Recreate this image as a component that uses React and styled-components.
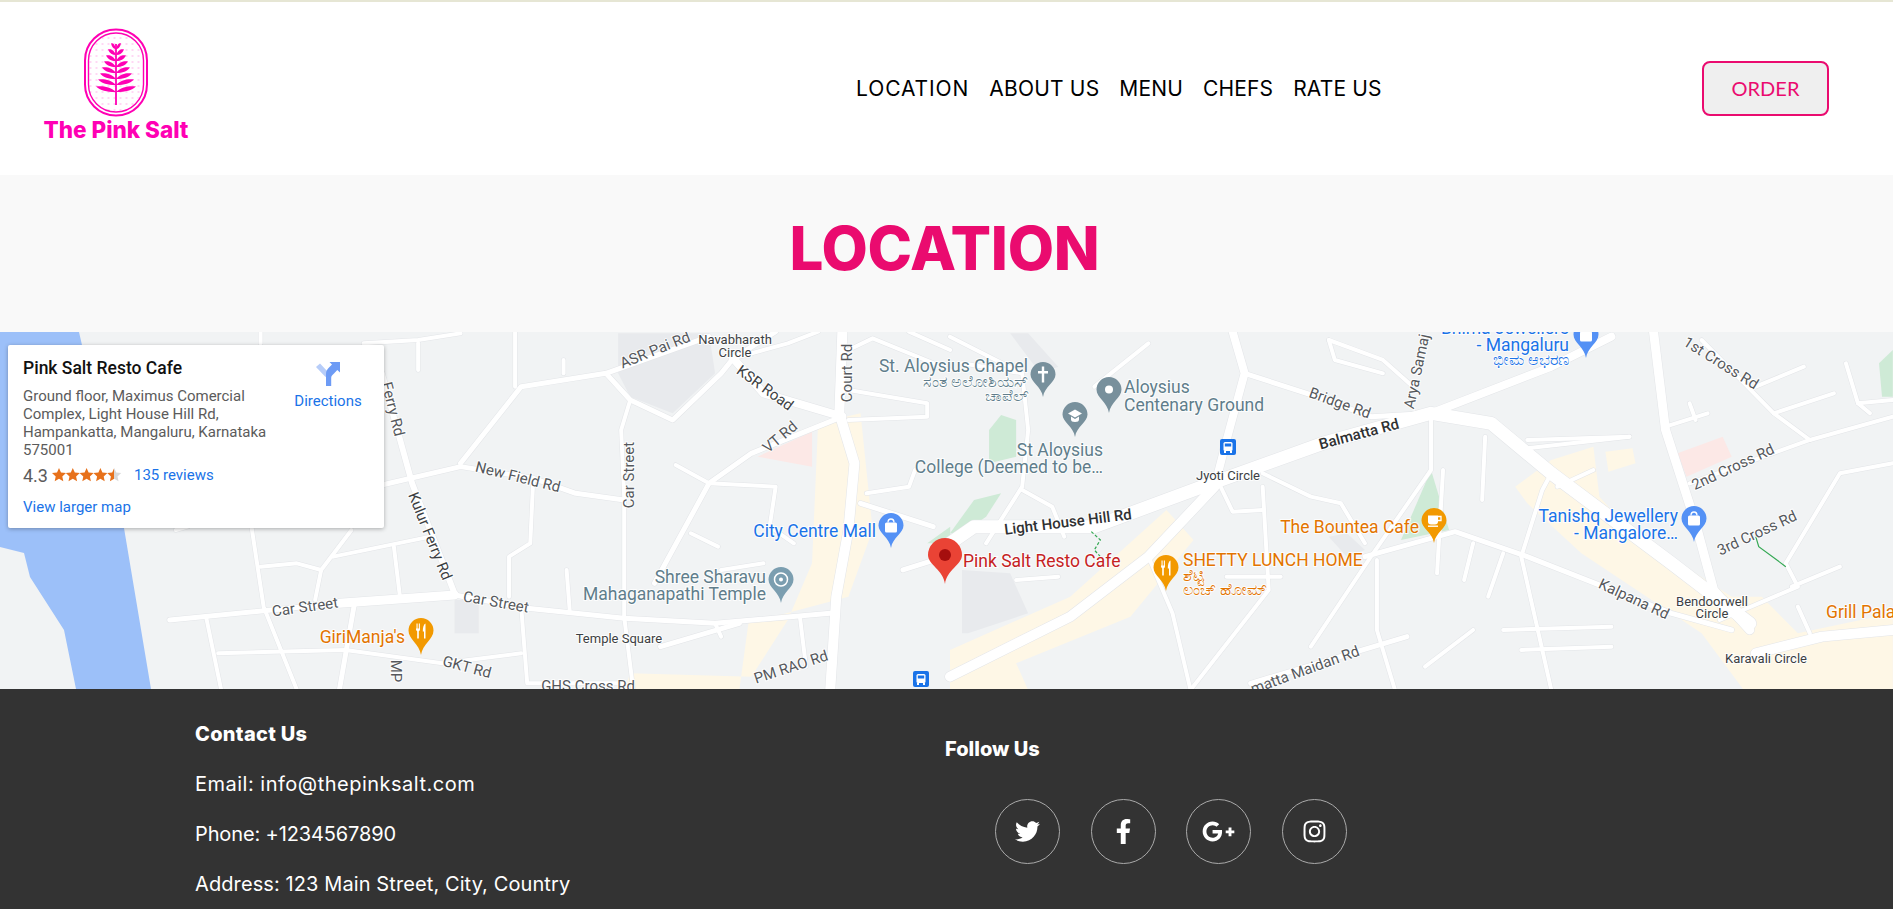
import React from "react";
import styled, { createGlobalStyle } from "styled-components";
import { FaTwitter, FaFacebookF, FaGooglePlusG, FaInstagram } from "react-icons/fa";

const GlobalStyle = createGlobalStyle`
  html, body {
    margin: 0;
    padding: 0;
    background: #fff;
    font-family: Inter, "Noto Sans", sans-serif;
  }
  * { box-sizing: border-box; }
`;

const Header = styled.header`
  height: 175px;
  border-top: 2px solid #e6e6d4;
  background: #fff;
  padding: 0 64px 0 35px;
  display: grid;
  grid-template-columns: 821px 1fr auto;
  align-items: center;
`;

const LogoBox = styled.a`
  width: 162px;
  height: 125px;
  margin-top: -5px;
  display: flex;
  flex-direction: column;
  align-items: center;
  color: #ff00b4;
  text-decoration: none;
`;

const LogoMark = styled.svg`
  width: 66px;
  height: 90px;
  margin-top: 3px;
`;

const LogoText = styled.span`
  font-size: 22.5px;
  line-height: 26px;
  font-weight: 800;
  letter-spacing: 0;
  white-space: nowrap;
`;

const Nav = styled.nav`
  display: flex;
  gap: 20px;
`;

const NavLink = styled.a`
  font-size: 21px;
  line-height: 30px;
  font-weight: 400;
  letter-spacing: ${(p) => p.$spacing ?? 0.15}px;
  color: #000;
  text-decoration: none;
  white-space: nowrap;
`;

const OrderButton = styled.button`
  width: 127px;
  height: 55px;
  border: 2px solid #ea0b6f;
  border-radius: 8px;
  background: #efefef;
  color: #ea0b6f;
  font-family: Lato, sans-serif;
  font-size: 20px;
  font-weight: 400;
  margin-top: -1px;
`;

const TitleBand = styled.section`
  height: 157px;
  padding: 0 4px 12px 0;
  background: #f9f9f9;
  display: flex;
  align-items: center;
  justify-content: center;
`;

const Title = styled.h1`
  margin: 0;
  font-size: 60px;
  font-weight: 800;
  color: #ea0b6f;
  letter-spacing: -0.3px;
`;

const MapFrame = styled.section`
  position: relative;
  height: 357px;
  background: #f1f3f4;
  overflow: hidden;
  font-family: Roboto, sans-serif;
`;

const MapCanvas = styled.svg`
  display: block;
  width: 1893px;
  height: 357px;
`;

const Road = styled.polyline`
  fill: none;
  stroke: ${(p) => (p.$casing ? "#e3e5e8" : "#fff")};
  stroke-linecap: round;
  stroke-linejoin: round;
`;

const labelColors = {
  road: "#55585c",
  dark: "#3c3f43",
  main: "#2f3133",
  poi: "#607d8b",
  food: "#e37400",
  shop: "#1a73e8",
  place: "#c5221f",
};

const MapLabel = styled.text`
  font-family: Roboto, "Noto Sans", sans-serif;
  font-size: ${(p) => p.$size}px;
  font-weight: ${(p) => p.$weight};
  fill: ${(p) => labelColors[p.$kind]};
  stroke: rgba(255, 255, 255, 0.85);
  stroke-width: 2px;
  paint-order: stroke;
`;

const InfoCard = styled.div`
  position: absolute;
  left: 8px;
  top: 13px;
  width: 376px;
  height: 183px;
  background: #fff;
  border-radius: 2px;
  box-shadow: 0 1px 4px rgba(0, 0, 0, 0.3);
  padding: 12px 15px;
  display: flex;
  justify-content: space-between;
`;

const PlaceColumn = styled.div`
  width: 248px;
`;

const PlaceName = styled.div`
  font-size: 17.5px;
  line-height: 22px;
  font-weight: 500;
  color: #111;
`;

const PlaceAddress = styled.div`
  margin-top: 8px;
  font-size: 15px;
  line-height: 18px;
  color: #5b5b5b;
`;

const RatingRow = styled.div`
  margin-top: 4px;
  height: 24px;
  display: flex;
  align-items: center;
  color: #5b5b5b;
  font-size: 18px;
`;

const Stars = styled.svg`
  width: 70px;
  height: 14px;
  margin: 0 12px 0 4px;
`;

const BlueLink = styled.a`
  color: #1a73e8;
  font-size: 15px;
  line-height: 18px;
  text-decoration: none;
`;

const LargerMap = styled(BlueLink)`
  display: block;
  margin-top: 11px;
`;

const DirectionsBlock = styled.a`
  width: 68px;
  margin: 4px 7px 0 0;
  display: flex;
  flex-direction: column;
  align-items: center;
  color: #1a73e8;
  font-size: 15px;
  line-height: 18px;
  text-decoration: none;
`;

const DirectionsIcon = styled.svg`
  width: 26px;
  height: 26px;
  margin-bottom: 5px;
`;

const Footer = styled.footer`
  height: 220px;
  overflow: hidden;
  background: #333;
  color: #fff;
  padding: 30px 0 0 195px;
  display: grid;
  grid-template-columns: 750px 1fr;
`;

const FooterHeading = styled.h4`
  margin: 0 0 20px;
  font-size: 20px;
  line-height: 30px;
  font-weight: 800;
  letter-spacing: ${(p) => p.$spacing || 0}px;
`;

const FooterLine = styled.p`
  margin: 0 0 20px;
  font-size: 20px;
  line-height: 30px;
  letter-spacing: ${(p) => p.$spacing || 0}px;
`;

const FollowColumn = styled.div`
  padding-top: 15px;
`;

const SocialRow = styled.div`
  display: flex;
  gap: 30.7px;
  margin: 35px 0 0 50px;
`;

const SocialButton = styled.a`
  width: 65px;
  height: 65px;
  border: 1px solid #aaa;
  border-radius: 50%;
  display: flex;
  align-items: center;
  justify-content: center;
  color: #fff;
  font-size: ${(p) => p.$icon || 25}px;
`;

const leaves = [
  [5, 46], [8, 52], [10, 58], [12, 64], [14, 70], [16, 76], [18, 82], [20, 89],
];

const leafPath = (side, len, y) =>
  `M117.5 ${y + 3} C${117.5 + side * len * 0.4} ${y + 3.2} ${117.5 + side * len * 0.8} ${y + 1.5} ${
    117.5 + side * len
  } ${y - 2.5} C${117.5 + side * len * 0.7} ${y - 3.5} ${117.5 + side * len * 0.3} ${y - 2.5} 117.5 ${y + 3}Z`;

function Logo() {
  return (
    <LogoBox href="#home">
      <LogoMark viewBox="84.5 27 66 90">
        <defs>
          <pattern id="salt" width="6" height="6" patternUnits="userSpaceOnUse">
            <circle cx="2" cy="2" r="0.8" fill="#ff00b4" opacity="0.35" />
          </pattern>
        </defs>
        <rect x="86.5" y="29.5" width="62" height="86" rx="31" fill="none" stroke="#ff00b4" strokeWidth="2" />
        <rect x="90" y="33" width="55" height="79" rx="27.5" fill="url(#salt)" stroke="#ff00b4" strokeWidth="1.4" />
        <rect x="116.6" y="44" width="1.8" height="61" fill="#ff00b4" />
        {leaves.map(([len, y]) => (
          <g key={y} fill="#ff00b4">
            <path d={leafPath(-1, len, y)} />
            <path d={leafPath(1, len, y)} />
          </g>
        ))}
      </LogoMark>
      <LogoText>The Pink Salt</LogoText>
    </LogoBox>
  );
}

// road traces, read off the left and right half of the map
const leftRoads = [
  [6, "630,130 680,460 750,790"],
  [5, "280,870 560,820"],
  [9, "560,820 750,795"],
  [5, "750,795 870,835 1030,865 1180,880 1370,850"],
  [10, "1390,5 1385,250 1410,400 1400,600 1380,800 1370,1080"],
  [8, "1210,85 1260,190 1390,260"],
  [5, "760,400 860,170 1000,130 1170,20"],
  [5, "1000,130 1040,210 1110,270 1190,130 1210,85 1280,5"],
  [5, "1390,260 1240,370 1170,460 1080,760"],
  [5, "630,465 760,410 880,445 950,490 1030,510"],
  [4, "1040,210 1025,300 1030,500 1030,860 1045,1080"],
  [4, "880,445 875,640 840,680 840,800"],
  [4, "415,590 435,830 490,1080"],
  [4, "340,860 365,1080"],
  [4, "430,710 490,700 530,720 580,600"],
  [4, "550,680 710,620"],
  [4, "530,720 520,810"],
  [4, "650,650 660,800"],
  [5, "585,820 560,1080"],
  [4, "360,970 570,960 730,1000 860,970"],
  [4, "860,830 870,1060 1030,1060"],
  [5, "1090,950 1220,880"],
  [4, "1400,180 1530,220 1530,260 1400,270"],
  [4, "1430,490 1500,470 1510,420"],
  [5, "1420,520 1540,590"],
  [5, "1490,720 1560,680"],
  [4, "930,90 930,130"],
  [4, "1115,405 1170,460 1280,470 1270,590 1310,640"],
  [4, "1140,610 1185,650"],
  [4, "935,720 940,840"],
  [4, "850,5 850,170"],
  [4, "690,40 690,120"],
  [4, "430,5 430,40"],
  [4, "1180,880 1190,920"],
  [4, "1320,860 1330,1010"],
  [4, "1500,5 1568,60"],
  [4, "1190,720 1260,700"],
  [4, "600,40 690,30 760,10"],
  [4, "290,600 310,590"],
  [4, "1400,60 1440,25 1568,120"],
  [4, "1210,85 1300,40 1350,5"],
];

const rightRoads = [
  [13, "0,640 40,590 240,590 420,470 620,340 800,250 900,280 1000,430 1200,700 1330,880"],
  [8, "800,250 1000,110 1100,20"],
  [10, "0,1040 200,860 330,680 440,470"],
  [8, "470,5 490,130 460,330 440,470"],
  [5, "490,130 610,200 700,260 800,250"],
  [9, "1170,5 1190,300 1240,580 1270,780 1330,900"],
  [5, "690,680 840,605 960,680 1200,850 1300,900"],
  [10, "1340,970 1450,920 1568,900"],
  [4, "1568,400 1480,430 1390,700 1410,770 1280,870"],
  [4, "1250,30 1370,250 1470,190"],
  [4, "1190,290 1260,250"],
  [4, "1230,460 1430,330 1568,260"],
  [4, "1370,250 1430,330"],
  [4, "1490,100 1510,220 1568,210"],
  [4, "800,250 800,420 700,680 600,950"],
  [4, "820,420 810,730"],
  [4, "890,320 885,510"],
  [4, "960,330 1130,320"],
  [4, "960,355 1130,320"],
  [4, "1000,430 985,480 950,680 990,1000 1000,1080"],
  [4, "710,690 710,900 740,1080"],
  [4, "400,1080 530,780 520,470"],
  [5, "500,1060 760,920"],
  [4, "330,680 370,850 400,1080"],
  [4, "630,30 720,90 770,170"],
  [4, "520,430 600,500 650,520 690,640"],
  [4, "450,470 470,545 520,540"],
  [4, "0,20 120,130 130,300 120,470 60,640"],
  [4, "240,170 330,40"],
  [4, "120,480 170,530 190,620"],
  [4, "870,640 855,750"],
  [4, "920,670 895,800"],
  [4, "920,900 1100,890"],
  [4, "950,960 1100,950"],
  [4, "1230,220 1240,270"],
  [4, "1400,770 1480,710"],
  [4, "20,100 120,130"],
  [4, "180,740 110,750"],
  [4, "1510,220 1530,250"],
  [4, "1010,470 1070,420"],
  [4, "1410,830 1430,910"],
  [4, "460,740 550,740"],
  [4, "630,30 640,90 720,130"],
  [4, "1340,170 1420,110"],
  [4, "870,900 790,1010"],
];

const leftFills = [
  ["#e8eaed", "1020,10 1170,10 1180,130 1110,250 1040,200 1020,130"],
  ["#e8eaed", "750,810 790,810 790,910 750,910"],
  ["#fce8e6", "1250,380 1340,305 1340,410"],
  ["#fef7e6", "1350,280 1420,250 1440,600 1400,800 1235,880 1220,1080 1030,1080 1040,1030 1240,1040 1300,870 1340,700"],
  ["#ceead6", "1568,590 1530,640 1568,640"],
];

const rightFills = [
  ["#e8eaed", "20,720 100,730 130,850 30,910 20,910"],
  ["#e8eaed", "100,10 130,10 180,110 150,130"],
  ["#e8eaed", "630,620 660,610 690,660 660,680"],
  ["#fef7e6", "0,960 200,800 360,540 405,630 300,860 110,1000 130,1080 0,1080"],
  ["#fef7e6", "940,470 1000,390 1070,350 1080,500 1130,600 1300,800 1350,800 1410,910 1568,850 1568,1080 1320,1080 1250,910 1050,670 960,520"],
  ["#fef7e6", "1090,365 1135,355 1140,400 1095,425"],
  ["#fce8e6", "1210,370 1285,320 1300,380 1225,440"],
  ["#ceead6", "65,300 85,255 110,270 110,380 65,400"],
  ["#ceead6", "0,610 40,510 85,490 60,560 20,610"],
  ["#ceead6", "800,420 830,600 750,630"],
  ["#ceead6", "1545,100 1568,60 1568,200 1550,200"],
];

const labels = [
  ["Navabharath", 735, 344, 0, "dark", 13, "middle"],
  ["Circle", 735, 357, 0, "dark", 13, "middle"],
  ["ASR Pai Rd", 655, 355, -22, "road", 15, "middle"],
  ["KSR Road", 765, 393, 36, "dark", 15, "middle"],
  ["Court Rd", 847, 378, -90, "road", 15, "middle"],
  ["VT Rd", 780, 442, -40, "road", 15, "middle"],
  ["New Field Rd", 518, 482, 14, "road", 15, "middle"],
  ["Car Street", 629, 480, -90, "road", 15, "middle"],
  ["Ferry Rd", 393, 414, 76, "road", 15, "middle"],
  ["Kulur Ferry Rd", 430, 541, 68, "dark", 15, "middle"],
  ["Car Street", 305, 612, -8, "road", 15, "middle"],
  ["Car Street", 496, 607, 10, "road", 15, "middle"],
  ["Temple Square", 619, 643, 0, "dark", 13, "middle"],
  ["GKT Rd", 467, 672, 15, "road", 15, "middle"],
  ["PM RAO Rd", 791, 672, -18, "road", 15, "middle"],
  ["GHS Cross Rd", 588, 691, 0, "road", 15, "middle"],
  ["MP", 396, 676, 90, "road", 15, "middle"],
  ["GiriManja's", 405, 643, 0, "food", 17.5, "end"],
  ["City Centre Mall", 876, 537, 0, "shop", 17.5, "end"],
  ["Shree Sharavu", 766, 583, 0, "poi", 17.5, "end"],
  ["Mahaganapathi Temple", 766, 600, 0, "poi", 17.5, "end"],
  ["St. Aloysius Chapel", 1028, 372, 0, "poi", 17.5, "end"],
  ["ಸಂತ ಅಲೋಶಿಯಸ್", 1028, 387, 0, "poi", 16, "end"],
  ["ಚಾಪೆಲ್", 1028, 401, 0, "poi", 16, "end"],
  ["Aloysius", 1124, 393, 0, "poi", 17.5, "start"],
  ["Centenary Ground", 1124, 411, 0, "poi", 17.5, "start"],
  ["St Aloysius", 1103, 456, 0, "poi", 17.5, "end"],
  ["College (Deemed to be…", 1103, 473, 0, "poi", 17.5, "end"],
  ["Bridge Rd", 1340, 408, 20, "road", 15, "middle"],
  ["Arya Samaj R", 1418, 370, -78, "road", 15, "middle"],
  ["Bhima Jewellers", 1569, 334, 0, "shop", 17.5, "end"],
  ["- Mangaluru", 1569, 351, 0, "shop", 17.5, "end"],
  ["ಭೀಮ ಆಭರಣ", 1569, 365, 0, "shop", 16, "end"],
  ["1st Cross Rd", 1721, 368, 32, "road", 15, "middle"],
  ["Balmatta Rd", 1359, 439, -15, "main", 15, "middle"],
  ["Jyoti Circle", 1228, 480, 0, "dark", 13, "middle"],
  ["Light House Hill Rd", 1068, 527, -7, "main", 15, "middle"],
  ["Pink Salt Resto Cafe", 963, 567, 0, "place", 17.5, "start"],
  ["SHETTY LUNCH HOME", 1183, 566, 0, "food", 17.5, "start"],
  ["ಶೆಟ್ಟಿ", 1183, 581, 0, "food", 16, "start"],
  ["ಲಂಚ್ ಹೋಮ್", 1183, 595, 0, "food", 16, "start"],
  ["The Bountea Cafe", 1419, 533, 0, "food", 17.5, "end"],
  ["Tanishq Jewellery", 1678, 522, 0, "shop", 17.5, "end"],
  ["- Mangalore…", 1678, 539, 0, "shop", 17.5, "end"],
  ["2nd Cross Rd", 1733, 472, -25, "road", 15, "middle"],
  ["3rd Cross Rd", 1757, 538, -25, "road", 15, "middle"],
  ["Kalpana Rd", 1634, 604, 25, "road", 15, "middle"],
  ["Bendoorwell", 1712, 606, 0, "dark", 13, "middle"],
  ["Circle", 1712, 618, 0, "dark", 13, "middle"],
  ["Karavali Circle", 1766, 663, 0, "dark", 13, "middle"],
  ["Grill Pala", 1826, 618, 0, "food", 17.5, "start"],
  ["matta Maidan Rd", 1305, 675, -20, "road", 15, "middle"],
];

function Pin({ x, tip, top, color, w = 25, children }) {
  const h = tip - top;
  const r = w / 2;
  return (
    <g transform={`translate(${x} ${tip})`}>
      <path
        d={`M0 0C-1.5 ${-h * 0.3} ${-r} ${-h * 0.42} ${-r} ${-(h - r)}A${r} ${r} 0 1 1 ${r} ${-(h - r)}C${r} ${-h * 0.42} 1.5 ${-h * 0.3} 0 0Z`}
        fill={color}
      />
      <g transform={`translate(0 ${-(h - r)})`} fill="#fff" stroke="none">
        {children}
      </g>
    </g>
  );
}

const Fork = () => (
  <>
    <path d="M-5 -7v6a2 2 0 0 0 1.2 1.8V8h1.6V.8A2 2 0 0 0-1 -1v-6h-.9v5h-.9v-5h-.8v5h-.9v-5z" />
    <path d="M4.5 -7C2.5 -6 1.8 -3 1.8 1H3V8h1.5z" />
  </>
);

const Cup = () => (
  <>
    <path d="M-6 -5H4v6a3 3 0 0 1-3 3H-3a3 3 0 0 1-3-3z" />
    <path d="M4 -4h3v4H4" fill="none" stroke="#fff" strokeWidth="1.3" />
    <rect x="-6" y="5" width="10" height="1.4" />
  </>
);

const Bag = () => (
  <>
    <rect x="-6" y="-3" width="12" height="10" rx="1.5" />
    <path d="M-3 -3a3 3.5 0 0 1 6 0" fill="none" stroke="#fff" strokeWidth="1.3" />
  </>
);

function BusStop({ x, y }) {
  return (
    <g transform={`translate(${x} ${y})`}>
      <rect x="-8" y="-8" width="16" height="16" rx="2" fill="#1a73e8" />
      <rect x="-4.5" y="-5" width="9" height="9" rx="1.5" fill="#fff" />
      <rect x="-3.2" y="-3.5" width="6.4" height="3" fill="#1a73e8" />
      <rect x="-4" y="4" width="2" height="2" fill="#fff" />
      <rect x="2" y="4" width="2" height="2" fill="#fff" />
    </g>
  );
}

function CityMap() {
  return (
    <MapCanvas viewBox="0 332 1893 357">
      <rect x="0" y="332" width="1893" height="357" fill="#f1f3f4" />
      <polygon
        points="0,332 79,332 124,528 151,689 76,689 64,630 30,577 24,553 0,547"
        fill="#9cc0f9"
      />
      <g transform="translate(0 330) scale(0.606 0.3333)">
        {leftFills.map(([color, pts]) => (
          <polygon key={pts} points={pts} fill={color} />
        ))}
        {leftRoads.map(([w, pts]) => (
          <Road key={pts} $casing points={pts} strokeWidth={w + 1} vectorEffect="non-scaling-stroke" />
        ))}
      </g>
      <g transform="translate(950 330) scale(0.6013 0.3333)">
        {rightFills.map(([color, pts]) => (
          <polygon key={pts} points={pts} fill={color} />
        ))}
        {rightRoads.map(([w, pts]) => (
          <Road key={pts} $casing points={pts} strokeWidth={w + 1} vectorEffect="non-scaling-stroke" />
        ))}
      </g>
      <g transform="translate(0 330) scale(0.606 0.3333)">
        {leftRoads.map(([w, pts]) => (
          <Road key={pts} points={pts} strokeWidth={w} vectorEffect="non-scaling-stroke" />
        ))}
      </g>
      <g transform="translate(950 330) scale(0.6013 0.3333)">
        {rightRoads.map(([w, pts]) => (
          <Road key={pts} points={pts} strokeWidth={w} vectorEffect="non-scaling-stroke" />
        ))}
        <polyline
          points="235,605 250,630 240,660 250,680"
          fill="none"
          stroke="#34a853"
          strokeWidth="1.2"
          strokeDasharray="3 2"
          vectorEffect="non-scaling-stroke"
        />
        <polyline
          points="1340,620 1345,650 1390,710"
          fill="none"
          stroke="#34a853"
          strokeWidth="1.2"
          vectorEffect="non-scaling-stroke"
        />
      </g>

      {labels.map(([text, x, y, rotate, kind, size, anchor]) => (
        <MapLabel
          key={`${text}-${x}`}
          x={x}
          y={y}
          textAnchor={anchor}
          transform={rotate ? `rotate(${rotate} ${x} ${y - 5})` : undefined}
          $kind={kind}
          $size={size}
          $weight={kind === "main" ? 500 : 400}
        >
          {text}
        </MapLabel>
      ))}

      <Pin x={421} tip={655} top={618} color="#f29900"><Fork /></Pin>
      <Pin x={891} tip={548} top={513} color="#5491f5"><Bag /></Pin>
      <Pin x={781} tip={603} top={567} color="#7b9eb0">
        <circle r="6.5" fill="none" stroke="#fff" strokeWidth="1.5" />
        <circle r="2" />
      </Pin>
      <Pin x={1043} tip={397} top={362} color="#78909c">
        <path d="M-1.2 -8h2.4v4.5H5v2.4H1.2V8h-2.4V-1.1H-5v-2.4h3.8z" />
      </Pin>
      <Pin x={1109} tip={413} top={377} color="#78909c">
        <circle r="4" />
      </Pin>
      <Pin x={1075} tip={437} top={402} color="#78909c">
        <path d="M-7 -1L0 -5 7 -1 0 3z" />
        <path d="M-4 2v3a4 2.5 0 0 0 8 0V2L0 4.5z" />
      </Pin>
      <Pin x={1166} tip={591} top={555} color="#f29900"><Fork /></Pin>
      <Pin x={1434} tip={543} top={508} color="#f29900"><Cup /></Pin>
      <Pin x={1694} tip={542} top={506} color="#5491f5"><Bag /></Pin>
      <Pin x={1586} tip={358} top={322} color="#5491f5"><Bag /></Pin>
      <Pin x={945} tip={584} top={538} color="#ea4335" w={34}>
        <circle r="6" fill="#a50e0e" />
      </Pin>
      <BusStop x={1228} y={447} />
      <BusStop x={921} y={679} />
    </MapCanvas>
  );
}

const starPath = "M7 0l2 4.6 5 .5-3.7 3.3 1 4.9L7 10.800l-4.300 2.500 1-4.900L0 5.100l5-.5z";

function Rating() {
  return (
    <Stars viewBox="0 0 70 14">
      <defs>
        <linearGradient id="half">
          <stop offset="50%" stopColor="#e7711b" />
          <stop offset="50%" stopColor="#d9d9d9" />
        </linearGradient>
      </defs>
      {[0, 1, 2, 3, 4].map((i) => (
        <path key={i} d={starPath} transform={`translate(${i * 13.8} 0)`} fill={i === 4 ? "url(#half)" : "#e7711b"} />
      ))}
    </Stars>
  );
}

function Card() {
  return (
    <InfoCard>
      <PlaceColumn>
        <PlaceName>Pink Salt Resto Cafe</PlaceName>
        <PlaceAddress>
          Ground floor, Maximus Comercial Complex, Light House Hill Rd, Hampankatta, Mangaluru, Karnataka 575001
        </PlaceAddress>
        <RatingRow>
          4.3
          <Rating />
          <BlueLink href="#reviews">135 reviews</BlueLink>
        </RatingRow>
        <LargerMap href="#map">View larger map</LargerMap>
      </PlaceColumn>
      <DirectionsBlock href="#directions">
        <DirectionsIcon viewBox="0 0 26 26">
          <path d="M1 6l4-3.5 9 9.5-3.5 4z" fill="#b7cdf9" />
          <path d="M11 25V13c0-3 1-4.500 3-6.500L17 3.500 14.500 1H25v10.500L22.300 9 19 12.500c-2 2-2.800 2.800-2.800 4.500v8z" fill="#6d9bf5" />
        </DirectionsIcon>
        Directions
      </DirectionsBlock>
    </InfoCard>
  );
}

export default function App() {
  return (
    <>
      <GlobalStyle />
      <Header>
        <Logo />
        <Nav>
          <NavLink href="#location" $spacing={0.9}>LOCATION</NavLink>
          <NavLink href="#about" $spacing={0.2}>ABOUT US</NavLink>
          <NavLink href="#menu">MENU</NavLink>
          <NavLink href="#chefs">CHEFS</NavLink>
          <NavLink href="#rate">RATE US</NavLink>
        </Nav>
        <OrderButton>ORDER</OrderButton>
      </Header>
      <TitleBand>
        <Title>LOCATION</Title>
      </TitleBand>
      <MapFrame>
        <CityMap />
        <Card />
      </MapFrame>
      <Footer>
        <div>
          <FooterHeading $spacing={0.3}>Contact Us</FooterHeading>
          <FooterLine $spacing={0.5}>Email: info@thepinksalt.com</FooterLine>
          <FooterLine $spacing={-0.13}>Phone: +1234567890</FooterLine>
          <FooterLine $spacing={0.1}>Address: 123 Main Street, City, Country</FooterLine>
        </div>
        <FollowColumn>
          <FooterHeading>Follow Us</FooterHeading>
          <SocialRow>
            <SocialButton href="#twitter" aria-label="Twitter"><FaTwitter /></SocialButton>
            <SocialButton href="#facebook" aria-label="Facebook"><FaFacebookF /></SocialButton>
            <SocialButton href="#google" aria-label="Google plus" $icon={33}><FaGooglePlusG /></SocialButton>
            <SocialButton href="#instagram" aria-label="Instagram"><FaInstagram /></SocialButton>
          </SocialRow>
        </FollowColumn>
      </Footer>
    </>
  );
}
